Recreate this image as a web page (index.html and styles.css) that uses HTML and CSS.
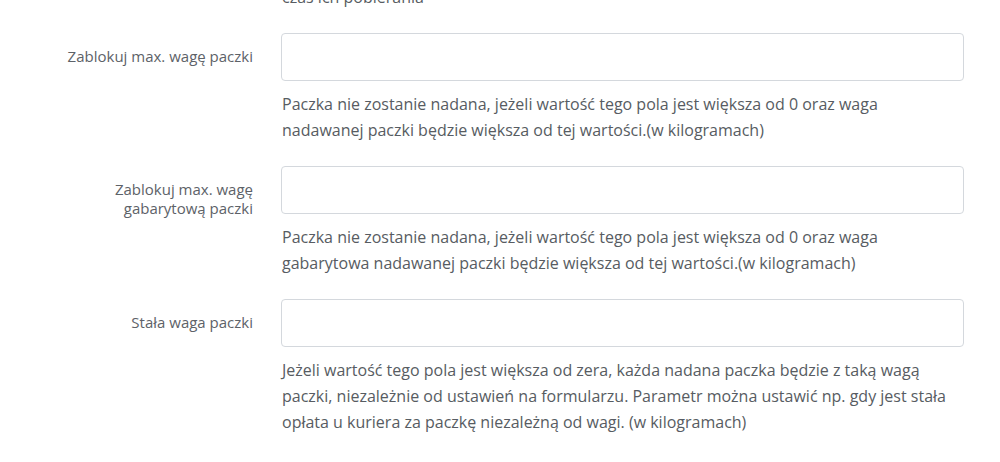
FILE: index.html
```html
<!DOCTYPE html>
<html lang="pl">
<head>
    <meta charset="UTF-8">
    <title>Ustawienia paczki</title>
    <link rel="stylesheet" href="styles.css">
</head>
<body>
    <div class="settings-form">
        <div class="form-group">
            <div class="form-label"></div>
            <div class="form-field">
                <p class="help-text">czas ich pobierania</p>
            </div>
        </div>
        <div class="form-group">
            <label class="form-label" for="maxWeight">Zablokuj max. wagę paczki</label>
            <div class="form-field">
                <input class="form-input" type="text" id="maxWeight">
                <p class="help-text">Paczka nie zostanie nadana, jeżeli wartość tego pola jest większa od 0 oraz waga nadawanej paczki będzie większa od tej wartości.(w kilogramach)</p>
            </div>
        </div>
        <div class="form-group">
            <label class="form-label" for="maxDimWeight">Zablokuj max. wagę gabarytową paczki</label>
            <div class="form-field">
                <input class="form-input" type="text" id="maxDimWeight">
                <p class="help-text">Paczka nie zostanie nadana, jeżeli wartość tego pola jest większa od 0 oraz waga gabarytowa nadawanej paczki będzie większa od tej wartości.(w kilogramach)</p>
            </div>
        </div>
        <div class="form-group">
            <label class="form-label" for="fixedWeight">Stała waga paczki</label>
            <div class="form-field">
                <input class="form-input" type="text" id="fixedWeight">
                <p class="help-text">Jeżeli wartość tego pola jest większa od zera, każda nadana paczka będzie z taką wagą paczki, niezależnie od ustawień na formularzu. Parametr można ustawić np. gdy jest stała opłata u kuriera za paczkę niezależną od wagi. (w kilogramach)</p>
            </div>
        </div>
    </div>
</body>
</html>
```

FILE: styles.css
```css
body {
    margin: 0;
    background-color: #fff;
    font-family: "Open Sans", "Liberation Sans", sans-serif;
    color: #5a5f66;
    overflow: hidden;
}
.settings-form {
    margin-top: -26px;
    padding-right: 36px;
}
.form-group {
    display: grid;
    grid-template-columns: 253px 1fr;
    column-gap: 28px;
    margin-bottom: 23px;
}
.form-label {
    padding: 14px 0 0 50px;
    text-align: right;
    font-size: 15px;
    line-height: 19px;
    color: #5d6268;
}
.form-field {
    display: flex;
    flex-direction: column;
}
.form-input {
    box-sizing: border-box;
    height: 48px;
    width: 100%;
    border: 1px solid #d4d8dd;
    border-radius: 4px;
    background: #fff;
    padding: 0 12px;
    font-family: inherit;
    font-size: 15px;
}
.help-text {
    margin: 10px 0 0;
    padding: 0 8px 0 1px;
    font-size: 16px;
    line-height: 26px;
    color: #575c62;
}
```
